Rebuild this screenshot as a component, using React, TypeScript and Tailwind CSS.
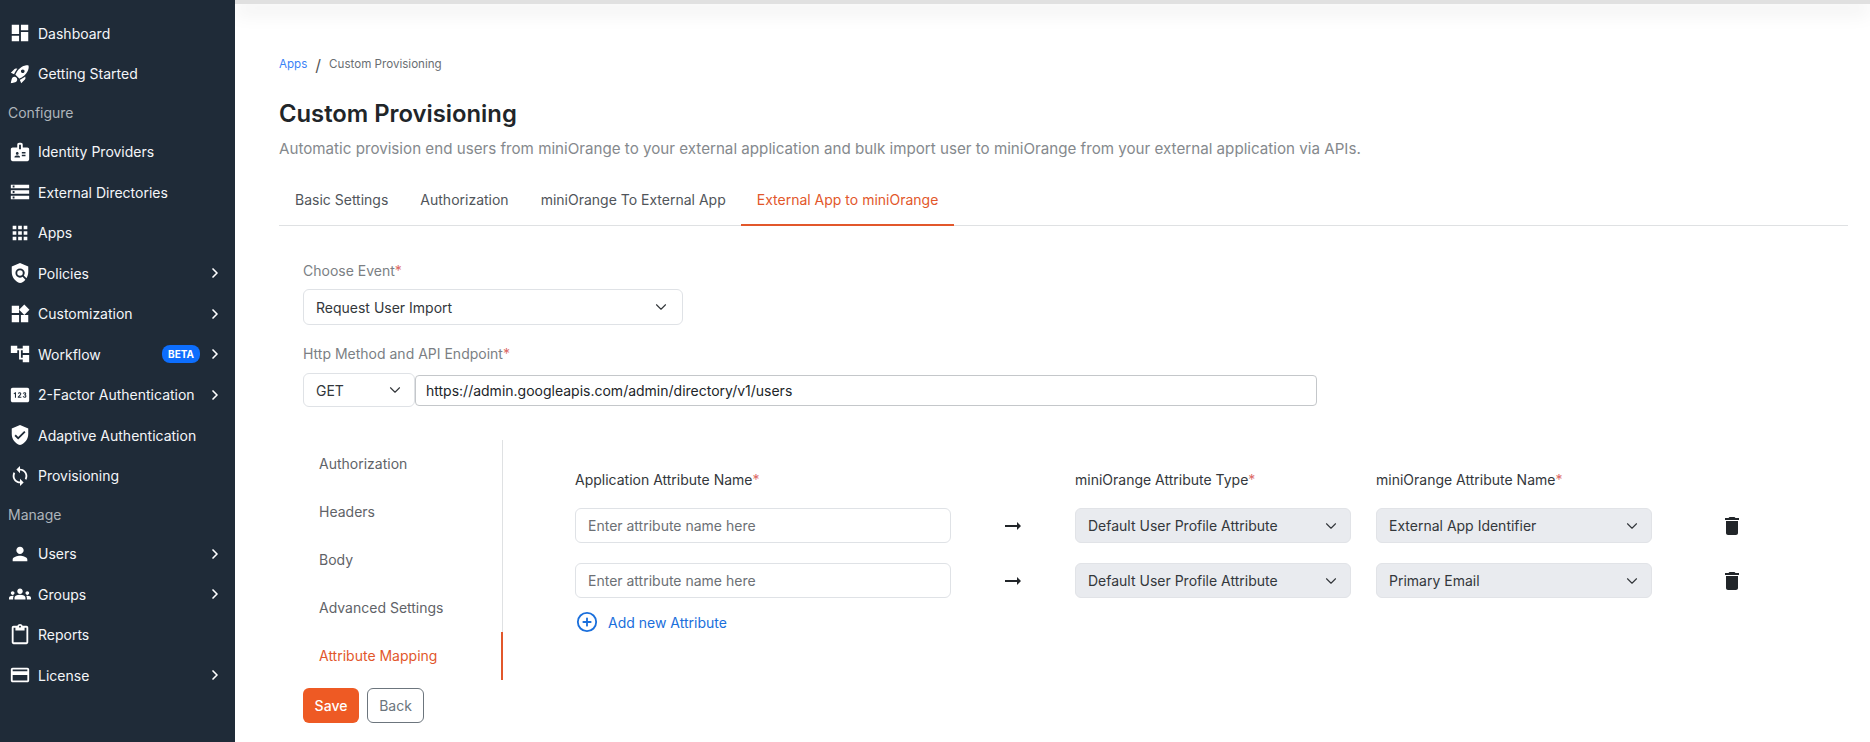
import { ChevronDown, ChevronRight, CirclePlus } from "lucide-react";
import {
  MdDashboard,
  MdRocketLaunch,
  MdBadge,
  MdStorage,
  MdApps,
  MdPolicy,
  MdWidgets,
  MdAccountTree,
  MdPin,
  MdVerifiedUser,
  MdSync,
  MdPerson,
  MdGroups,
  MdOutlineContentPaste,
  MdOutlineCreditCard,
  MdDelete,
  MdArrowRightAlt,
} from "react-icons/md";

const font = "font-['Inter','Liberation_Sans',sans-serif]";

const nav = [
  { label: "Dashboard", icon: MdDashboard },
  { label: "Getting Started", icon: MdRocketLaunch },
  { heading: "Configure" },
  { label: "Identity Providers", icon: MdBadge },
  { label: "External Directories", icon: MdStorage },
  { label: "Apps", icon: MdApps },
  { label: "Policies", icon: MdPolicy, more: true },
  { label: "Customization", icon: MdWidgets, more: true },
  { label: "Workflow", icon: MdAccountTree, more: true, beta: true },
  { label: "2-Factor Authentication", icon: MdPin, more: true },
  { label: "Adaptive Authentication", icon: MdVerifiedUser },
  { label: "Provisioning", icon: MdSync },
  { heading: "Manage" },
  { label: "Users", icon: MdPerson, more: true },
  { label: "Groups", icon: MdGroups, more: true },
  { label: "Reports", icon: MdOutlineContentPaste },
  { label: "License", icon: MdOutlineCreditCard, more: true },
];

const tabs = ["Basic Settings", "Authorization", "miniOrange To External App"];
const sideTabs = ["Authorization", "Headers", "Body", "Advanced Settings"];
const rows = ["External App Identifier", "Primary Email"];

function Sidebar() {
  return (
    <aside className="w-[235px] shrink-0 bg-[#1f2b38] pt-[13px] text-[#f4f6f8]">
      {nav.map((item) => {
        if (item.heading) {
          return (
            <div
              key={item.heading}
              className="flex h-[37.5px] items-center pl-2 text-[14px] text-[#aeb5bb]"
            >
              {item.heading}
            </div>
          );
        }
        const Icon = item.icon!;
        return (
          <div key={item.label} className="flex h-[40.5px] items-center pr-3 pl-[9px]">
            <Icon className="size-[22px] shrink-0 text-white" />
            <span className="ml-[7px] flex-1 text-[14px] whitespace-nowrap">{item.label}</span>
            {item.beta && (
              <span className="mr-[7px] rounded-lg bg-[#0d6efd] px-[6px] text-[10px] leading-[18px] font-bold text-white">
                BETA
              </span>
            )}
            {item.more && <ChevronRight className="size-4 text-white" strokeWidth={2.5} />}
          </div>
        );
      })}
    </aside>
  );
}

function Label({ text, muted }: { text: string; muted?: boolean }) {
  return (
    <div className={`h-5 text-[14px] leading-5 ${muted ? "text-[#7b7f84]" : "text-[#33373b]"}`}>
      {text}
      <span className="text-[#dc6a66]">*</span>
    </div>
  );
}

function GraySelect({ value }: { value: string }) {
  return (
    <div className="flex h-[35px] w-[276px] items-center justify-between rounded-md border border-[#e1e3e7] bg-[#e9ebef] pr-[10px] pl-3 text-[14px] text-[#33373b]">
      {value}
      <ChevronDown className="size-[18px] text-[#33373b]" strokeWidth={1.5} />
    </div>
  );
}

export default function App() {
  return (
    <div className={`flex h-[742px] w-full overflow-hidden bg-white ${font}`}>
      <Sidebar />
      <main className="relative min-w-0 flex-1 overflow-hidden">
        <div className="h-1 bg-[#e0e0e0] shadow-[0_6px_20px_rgba(0,0,0,0.2)]" />
        <div className="pt-[53px] pr-[22px] pl-[44px]">
          <div className="flex h-4 items-center text-[11.6px] text-[#6a6e72]">
            <span className="text-[#3b82f6]">Apps</span>
            <span className="mx-[8px] text-[16px] text-[#555]">/</span>
            <span>Custom Provisioning</span>
          </div>
          <h1 className="mt-[25px] h-8 text-[23.8px] leading-8 font-semibold text-[#212529]">
            Custom Provisioning
          </h1>
          <p className="mt-[7px] h-6 text-[15.17px] leading-6 whitespace-nowrap text-[#85898d]">
            Automatic provision end users from miniOrange to your external application and bulk
            import user to miniOrange from your external application via APIs.
          </p>
          <div className="mt-[14px] flex h-[51px] items-stretch border-b border-[#dfe1e3]">
            {tabs.map((tab) => (
              <div key={tab} className="flex items-center px-4 pb-[2px] text-[14px] text-[#50555a]">
                {tab}
              </div>
            ))}
            <div className="-mb-px -ml-px flex items-center border-b-2 border-[#e2572b] px-4 text-[14px] text-[#e2572b]">
              External App to miniOrange
            </div>
          </div>

          <div className="pt-[35px] pl-6">
            <Label text="Choose Event" muted />
            <div className="mt-2 flex h-9 w-[380px] items-center justify-between rounded-md border border-[#dfe2e6] pr-3 pl-3 text-[14px] text-[#33373b]">
              Request User Import
              <ChevronDown className="size-[18px]" strokeWidth={1.5} />
            </div>
            <div className="mt-[19px]">
              <Label text="Http Method and API Endpoint" muted />
            </div>
            <div className="mt-[9px] flex h-[34px] items-center">
              <div className="flex h-[34px] w-[112px] items-center justify-between rounded-md border border-[#dfe2e6] pr-[10px] pl-3 text-[14px] text-[#33373b]">
                GET
                <ChevronDown className="size-[18px]" strokeWidth={1.5} />
              </div>
              <input
                readOnly
                value="https://admin.googleapis.com/admin/directory/v1/users"
                className="h-[31px] w-[902px] rounded-[4px] border border-[#c4c7ca] pl-[10px] text-[14px] text-[#212529] outline-none"
              />
            </div>

            <div className="mt-[33px] flex">
              <div className="w-[200px] shrink-0 border-r border-[#dfe1e3]">
                {sideTabs.map((tab) => (
                  <div key={tab} className="flex h-12 items-center pb-[2px] pl-4 text-[14px] text-[#5f6368]">
                    {tab}
                  </div>
                ))}
                <div className="-mr-px flex h-12 items-center border-r-2 border-[#e2572b] pb-[2px] pl-4 text-[14px] text-[#e2572b]">
                  Attribute Mapping
                </div>
              </div>
              <div className="pt-[30px] pl-[72px]">
                <div className="flex">
                  <div className="w-[376px]">
                    <Label text="Application Attribute Name" />
                  </div>
                  <div className="ml-[124px] w-[276px]">
                    <Label text="miniOrange Attribute Type" />
                  </div>
                  <div className="ml-[25px] w-[276px]">
                    <Label text="miniOrange Attribute Name" />
                  </div>
                </div>
                <div className="mt-[18px] flex flex-col gap-5">
                  {rows.map((name) => (
                    <div key={name} className="flex h-[35px] items-center">
                      <input
                        placeholder="Enter attribute name here"
                        className="h-[35px] w-[376px] rounded-md border border-[#dfe2e6] pl-3 text-[14px] outline-none placeholder:text-[#6c7075]"
                      />
                      <div className="flex w-[124px] justify-center">
                        <MdArrowRightAlt className="size-6 text-[#212529]" />
                      </div>
                      <GraySelect value="Default User Profile Attribute" />
                      <div className="ml-[25px]">
                        <GraySelect value={name} />
                      </div>
                      <div className="flex w-[160px] justify-center">
                        <MdDelete className="size-6 text-[#212529]" />
                      </div>
                    </div>
                  ))}
                </div>
                <div className="mt-[14px] flex h-5 items-center text-[14px] text-[#1a6fdc]">
                  <CirclePlus className="ml-[1px] size-[22px]" strokeWidth={2} />
                  <span className="ml-[10px]">Add new Attribute</span>
                </div>
              </div>
            </div>
            <div className="mt-2 flex gap-2">
              <button className="h-[35px] w-14 rounded-md bg-[#ee5a24] text-[14px] font-medium text-white">
                Save
              </button>
              <button className="h-[35px] w-[57px] rounded-md border border-[#6c757d] text-[14px] text-[#6c757d]">
                Back
              </button>
            </div>
          </div>
        </div>
      </main>
    </div>
  );
}
